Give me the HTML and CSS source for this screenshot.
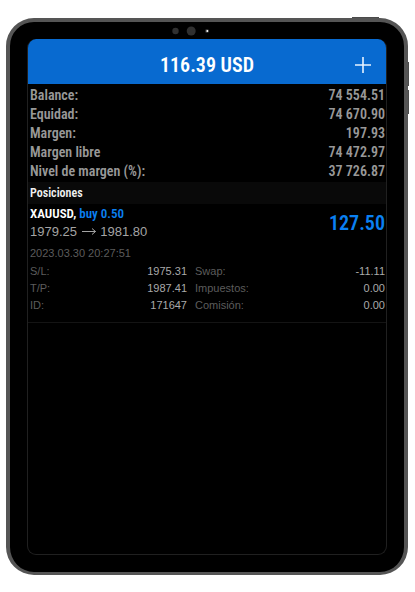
FILE: index.html
```html
<!DOCTYPE html>
<html lang="es">
<head>
<meta charset="utf-8">
<meta name="viewport" content="width=device-width, initial-scale=1">
<title>116.39 USD</title>
<link rel="stylesheet" href="styles.css">
</head>
<body>
<div class="tablet">
  <span class="key key-power"></span>
  <span class="key key-up"></span>
  <span class="key key-down"></span>
  <div class="sensors">
    <svg width="38" height="10" viewBox="0 0 38 10" aria-hidden="true">
      <circle cx="3.5" cy="5" r="3.2" fill="#303030"/>
      <circle cx="19.2" cy="5" r="4.5" fill="#303030"/>
      <circle cx="35" cy="5" r="2" fill="#333"/>
      <circle cx="35.3" cy="5" r="1" fill="#fff"/>
    </svg>
  </div>
  <main class="screen">
    <header class="bar">
      <h1 class="total">116.39 USD</h1>
      <button class="add" type="button" aria-label="Nueva orden">
        <svg width="16" height="16" viewBox="0 0 16 16" aria-hidden="true">
          <path d="M8 0v16M0 8h16" stroke="#e8f3ff" stroke-width="1.6" fill="none"/>
        </svg>
      </button>
    </header>
    <dl class="account">
      <div class="row"><dt>Balance:</dt><dd>74 554.51</dd></div>
      <div class="row"><dt>Equidad:</dt><dd>74 670.90</dd></div>
      <div class="row"><dt>Margen:</dt><dd>197.93</dd></div>
      <div class="row"><dt>Margen libre</dt><dd>74 472.97</dd></div>
      <div class="row"><dt>Nivel de margen (%):</dt><dd>37 726.87</dd></div>
    </dl>
    <h2 class="section">Posiciones</h2>
    <article class="position">
      <div class="summary">
        <div>
          <h3 class="symbol">XAUUSD, <span class="side">buy 0.50</span></h3>
          <p class="prices">1979.25 <svg class="arrow" width="16" height="9" viewBox="0 0 16 9" aria-hidden="true"><path d="M1 4.5h13.5M11 1.5l3.5 3l-3.5 3" fill="none" stroke="#a4a4a4" stroke-width="1"/></svg> 1981.80</p>
        </div>
        <strong class="profit">127.50</strong>
      </div>
      <time class="date">2023.03.30 20:27:51</time>
      <div class="details">
        <dl class="list">
          <div class="row"><dt>S/L:</dt><dd>1975.31</dd></div>
          <div class="row"><dt>T/P:</dt><dd>1987.41</dd></div>
          <div class="row"><dt>ID:</dt><dd>171647</dd></div>
        </dl>
        <dl class="list">
          <div class="row"><dt>Swap:</dt><dd>-11.11</dd></div>
          <div class="row"><dt>Impuestos:</dt><dd>0.00</dd></div>
          <div class="row"><dt>Comisión:</dt><dd>0.00</dd></div>
        </dl>
      </div>
    </article>
  </main>
</div>
</body>
</html>
```
FILE: styles.css
```css
* { box-sizing: border-box; margin: 0; padding: 0; }

:root { --condensed: "Roboto Condensed", Roboto, "Liberation Sans", sans-serif; }

body {
  min-height: 100vh;
  padding: 18px 7px 17px 6px;
  display: flex;
  background: #fff;
  font-family: "Liberation Sans", Arial, sans-serif;
}

.tablet {
  position: relative;
  flex: 1;
  display: flex;
  flex-direction: column;
  padding: 0 17px 17px 17px;
  background: #000;
  border: 4px solid #555;
  border-bottom-width: 3px;
  border-radius: 28px;
}

/* hardware keys on the edge of the case */
.key { position: absolute; background: #4b4b4b; }
.key-power { top: -5px; right: 25px; width: 27px; height: 1px; }
.key-up, .key-down { right: -5px; width: 1px; height: 24px; }
.key-up { top: 40px; }
.key-down { top: 68px; }

.sensors {
  height: 17px;
  display: flex;
  align-items: center;
  justify-content: center;
  padding-right: 33px;
}
.sensors svg { display: block; }

.screen {
  flex: 1;
  border: 1px solid #202020;
  border-top: 0;
  border-radius: 9px;
  overflow: hidden;
}

.bar {
  height: 45px;
  display: grid;
  grid-template-columns: 1fr auto 1fr;
  align-items: center;
  padding: 6px 15px 0;
  background: #086ad0;
}
.total {
  grid-column: 2;
  color: #fff;
  font: 600 20px/24px var(--condensed);
}
.add {
  justify-self: end;
  border: 0;
  background: none;
  cursor: pointer;
}
.add svg { display: block; }

.row { display: flex; justify-content: space-between; }

.account {
  padding: 2px 1px 1px 2px;
  color: #989898;
  font: 600 14px/19px var(--condensed);
}

.section {
  padding: 0 2px;
  background: #090909;
  color: #f0f0f0;
  font: 600 12px/22px var(--condensed);
}

.position {
  padding: 1px 1px 8px 2px;
  border-bottom: 1px solid #141414;
}
.summary { display: flex; justify-content: space-between; align-items: center; }
.symbol {
  color: #fff;
  font: 600 13px/18px var(--condensed);
}
.side { color: #0a7ff0; }
.prices { color: #a4a4a4; font-size: 13px; line-height: 18px; }
.profit {
  color: #0a80f2;
  font: 600 20px/24px var(--condensed);
}
.date {
  display: block;
  padding: 3px 0 1px;
  color: #5c5c5c;
  font-size: 11px;
  line-height: 18px;
}
.details {
  display: grid;
  grid-template-columns: 157fr 190fr;
  gap: 8px;
  font-size: 11px;
  line-height: 17px;
}
.details dt { color: #5c5c5c; }
.details dd { color: #aaa; }
```
